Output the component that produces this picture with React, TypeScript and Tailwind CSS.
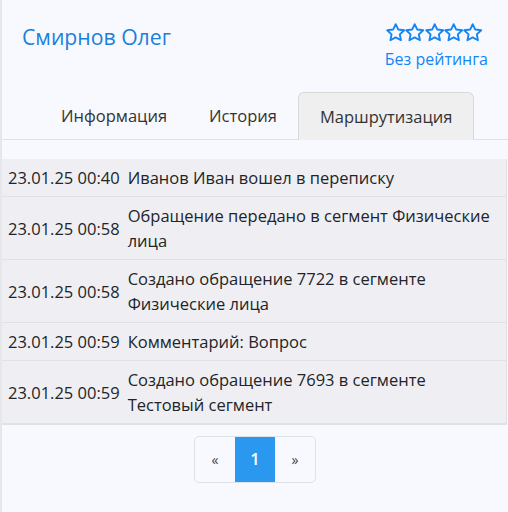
import React from 'react';

const rows = [
  { date: '23.01.25 00:40', text: 'Иванов Иван вошел в переписку' },
  { date: '23.01.25 00:58', text: 'Обращение передано в сегмент Физические лица' },
  { date: '23.01.25 00:58', text: 'Создано обращение 7722 в сегменте Физические лица' },
  { date: '23.01.25 00:59', text: 'Комментарий: Вопрос' },
  { date: '23.01.25 00:59', text: 'Создано обращение 7693 в сегменте Тестовый сегмент' },
];

const Star: React.FC = () => (
  <svg width="19.4" height="19" viewBox="1.2 1.6 21.6 21" fill="none" stroke="currentColor" strokeWidth={2.1} strokeLinejoin="round">
    <path d="M12 2.8l2.85 6 6.6.85-4.85 4.55 1.25 6.55L12 17.5l-5.85 3.25 1.25-6.55-4.85-4.55 6.6-.85z" />
  </svg>
);

const App: React.FC = () => {
  return (
    <div className="min-h-[512px] bg-[#f8f9fe] border-l-2 border-[#e6e7eb] font-['Open_Sans','Noto_Sans',sans-serif] text-[#212529]">
      {/* header */}
      <div className="flex justify-between items-start pl-5 pr-5 pt-[23px]">
        <h1 className="text-[21.2px] leading-[28px] text-[#1b80dc]">Смирнов Олег</h1>
        <div className="flex flex-col items-start text-[#1585f2]">
          <div className="flex h-[19px] ml-px">
            <Star />
            <Star />
            <Star />
            <Star />
            <Star />
          </div>
          <span className="mt-[5px] text-[16px] leading-[24px]">Без рейтинга</span>
        </div>
      </div>

      {/* tabs */}
      <div className="mt-[21px] flex border-b border-[#dee2e6] pl-[38px]">
        <div className="h-[47px] px-[21px] pt-px flex items-center text-[16.5px] text-[#333]">Информация</div>
        <div className="h-[47px] px-[21px] pt-px flex items-center text-[16.5px] text-[#333]">История</div>
        <div className="h-[48px] -mb-px px-[21px] pt-px flex items-center text-[16.5px] text-[#333] bg-[#efefef] border border-b-0 border-[#d9d9d9] rounded-t-[6px]">
          Маршрутизация
        </div>
      </div>

      {/* routing log */}
      <div className="mt-[19px] mr-px border-b-2 border-r border-[#e0e1e5]">
        <table className="w-full border-collapse text-[16.5px] leading-[25px]">
          <tbody>
            {rows.map((r, i) => (
              <tr key={i} className="bg-[#efeff3] border-b border-[#e0e1e5] last:border-b-0">
                <td className="pl-1.5 pr-1 py-1.5 whitespace-nowrap align-middle">{r.date}</td>
                <td className="pl-1 pr-2.5 py-1.5 align-middle">{r.text}</td>
              </tr>
            ))}
          </tbody>
        </table>
      </div>

      {/* pagination */}
      <div className="mt-[11px] flex justify-center">
        <div className="flex border border-[#dee2e6] rounded-[5px] overflow-hidden">
          <button className="w-10 h-[45px] flex items-center justify-center text-[14px] text-[#444]">«</button>
          <button className="w-10 h-[45px] flex items-center justify-center text-[16.5px] font-semibold text-white bg-[#2b98f0]">1</button>
          <button className="w-10 h-[45px] flex items-center justify-center text-[14px] text-[#444]">»</button>
        </div>
      </div>
    </div>
  );
};

export default App;
